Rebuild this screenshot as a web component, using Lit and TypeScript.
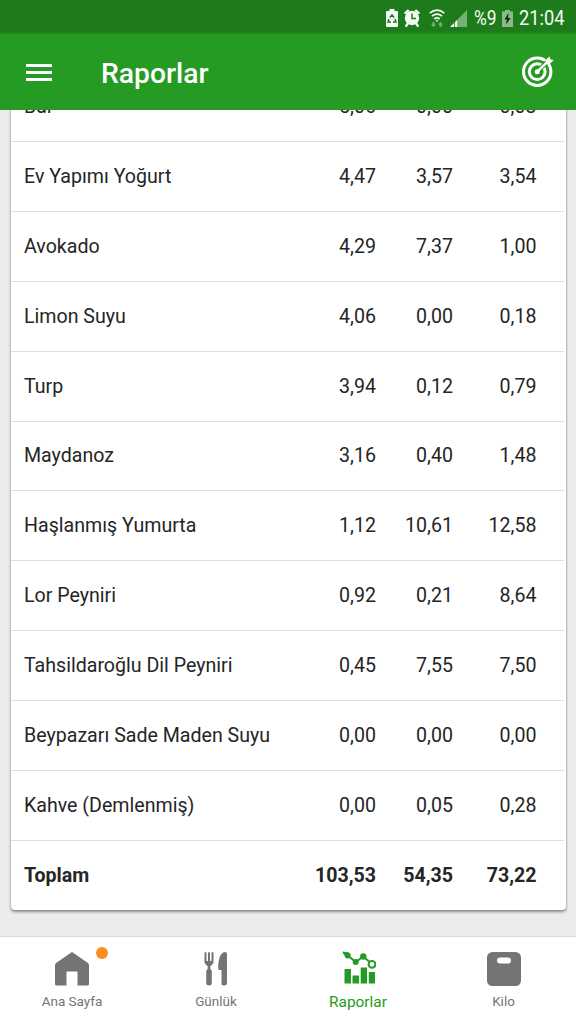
import { LitElement, html, css, svg } from "lit";
import { customElement, property } from "lit/decorators.js";
import { classMap } from "lit/directives/class-map.js";

interface Food {
  name: string;
  values: string[];
}

const foods: Food[] = [
  { name: "Bal", values: ["5,06", "0,00", "0,03"] },
  { name: "Ev Yapımı Yoğurt", values: ["4,47", "3,57", "3,54"] },
  { name: "Avokado", values: ["4,29", "7,37", "1,00"] },
  { name: "Limon Suyu", values: ["4,06", "0,00", "0,18"] },
  { name: "Turp", values: ["3,94", "0,12", "0,79"] },
  { name: "Maydanoz", values: ["3,16", "0,40", "1,48"] },
  { name: "Haşlanmış Yumurta", values: ["1,12", "10,61", "12,58"] },
  { name: "Lor Peyniri", values: ["0,92", "0,21", "8,64"] },
  { name: "Tahsildaroğlu Dil Peyniri", values: ["0,45", "7,55", "7,50"] },
  { name: "Beypazarı Sade Maden Suyu", values: ["0,00", "0,00", "0,00"] },
  { name: "Kahve (Demlenmiş)", values: ["0,00", "0,05", "0,28"] },
];

const total: Food = { name: "Toplam", values: ["103,53", "54,35", "73,22"] };

@customElement("status-bar")
export class StatusBar extends LitElement {
  static styles = css`
    :host {
      display: flex;
      align-items: center;
      justify-content: flex-end;
      height: 34px;
      flex-shrink: 0;
      box-sizing: border-box;
      padding: 2px 11px 0 0;
      background: linear-gradient(#1e7b1b 0 31px, #208a1e 34px);
      color: #f4fbf4;
      font-family: "Roboto", sans-serif;
      font-size: 20.5px;
      line-height: 32px;
    }

    svg {
      display: block;
      flex-shrink: 0;
    }

    .saver {
      margin-right: 6px;
    }

    .alarm {
      margin-right: 9px;
    }

    .wifi {
      margin-right: 5px;
    }

    .signal {
      margin-right: 7px;
    }

    .percent {
      width: 23px;
      margin-right: 5px;
    }

    .battery {
      margin-right: 6px;
    }

    .clock {
      width: 46px;
    }

    span {
      display: block;
      white-space: nowrap;
    }

    span b {
      display: inline-block;
      font-weight: 400;
      transform: scaleX(0.89);
      transform-origin: 0 50%;
    }

    .percent b {
      transform: scaleX(0.85);
    }
  `;

  render() {
    return html`
      <svg class="saver" width="12" height="18" viewBox="0 0 12 18">
        <path fill="currentColor" d="M3.5 0h5v2H11q1 0 1 1v14q0 1-1 1H1q-1 0-1-1V3q0-1 1-1h2.5z" />
        <path
          fill="none"
          stroke="#1e7b1b"
          stroke-width="1.5"
          d="M3.8 8.500 6 6l2.200 2.500M9 10l1 3H7M5 13H2l1-3"
        />
      </svg>
      <svg class="alarm" width="16" height="18" viewBox="0 0 16 18">
        <circle cx="8" cy="9" r="7.2" fill="currentColor" />
        <path
          stroke="currentColor"
          stroke-width="2.4"
          stroke-linecap="round"
          d="M1.5 4 4 1.7M14.5 4 12 1.7M3.5 15l-1.2 1.7M12.5 15l1.2 1.7"
        />
        <path fill="none" stroke="#1e7b1b" stroke-width="1.5" d="M8 4.5V9.500h4" />
      </svg>
      <svg class="wifi" width="16" height="18" viewBox="0 0 16 18">
        <g fill="none" stroke="currentColor" stroke-width="1.7">
          <path d="M.7 4.200q7.300-6 14.600 0M3 7.200q5-4 10 0M5.300 10q2.700-2.200 5.400 0" />
        </g>
        <path fill="currentColor" d="M6.500 11.300h3L8 13z" />
        <path fill="currentColor" opacity=".45" d="M3.5 13h2v2.500H7L4.500 18 2 15.500h1.500zM10.500 18h2v-2.500H14L11.500 13 9 15.500h1.500z" />
      </svg>
      <svg class="signal" width="17" height="17" viewBox="0 0 17 17">
        <path fill="currentColor" opacity=".42" d="M17 0v17H8V9z" />
        <path fill="currentColor" d="M7.500 9.500V17H4.800v-4.800zM4 13v4H0z" />
      </svg>
      <span class="percent"><b>%9</b></span>
      <svg class="battery" width="11" height="17" viewBox="0 0 11 17">
        <path fill="currentColor" opacity=".5" d="M3 0h5v1.500h3V17H0V1.500h3z" />
        <path fill="#0d2b0d" d="M6.500 3 2.500 9.500h2.300L4 14.500 8.700 8H6.200z" />
      </svg>
      <span class="clock"><b>21:04</b></span>
    `;
  }
}

@customElement("app-header")
export class AppHeader extends LitElement {
  static styles = css`
    :host {
      display: flex;
      align-items: center;
      height: 76px;
      flex-shrink: 0;
      box-sizing: border-box;
      padding: 0 22px 0 26px;
      background: #259b24;
      color: #fff;
      font-family: "Roboto", sans-serif;
    }

    .menu {
      display: flex;
      flex-direction: column;
      gap: 4px;
      width: 26px;
      margin-right: 49px;
    }

    .menu i {
      height: 3px;
      background: #fff;
    }

    h1 {
      flex: 1;
      margin: 0;
      padding-top: 3px;
      font-size: 28.3px;
      font-weight: 500;
      line-height: 32px;
    }

    svg {
      display: block;
      margin-bottom: 1px;
    }
  `;

  render() {
    return html`
      <div class="menu"><i></i><i></i><i></i></div>
      <h1>Raporlar</h1>
      <svg width="32" height="32" viewBox="0 0 32 32">
        <g fill="none" stroke="#fff">
          <circle cx="15.2" cy="15.7" r="13.7" stroke-width="3" />
          <circle cx="15.2" cy="15.7" r="7.9" stroke-width="3" />
        </g>
        <path stroke="#259b24" stroke-width="4.5" d="M16 15 29 2" />
        <circle cx="15.2" cy="15.7" r="2.5" fill="#fff" />
        <path stroke="#fff" stroke-width="2.4" d="M15.2 15.700 28 3.500" />
        <path fill="#fff" d="m23.500 7.500.3-3.500L27.500.2l.8 3 3.400.8-4 4-4.200.300z" />
      </svg>
    `;
  }
}

@customElement("food-table")
export class FoodTable extends LitElement {
  static styles = css`
    :host {
      display: block;
      box-sizing: border-box;
      background: #fff;
      border-radius: 4px;
      box-shadow: 0 2px 3px rgba(0, 0, 0, 0.4), 0 0 2px rgba(0, 0, 0, 0.2);
      color: #252525;
      font-family: "Roboto", sans-serif;
      font-size: 19.6px;
    }

    .row {
      display: grid;
      grid-template-columns: 1fr 77px 77px 83.5px;
      align-items: center;
      height: 69.85px;
      box-sizing: border-box;
      margin-right: 2px;
      padding: 0 27.5px 0 13px;
      border-bottom: 1px solid #dfdfdf;
      white-space: nowrap;
    }

    .value {
      text-align: right;
    }

    .total {
      height: 69.4px;
      border-bottom: none;
      font-weight: 700;
    }
  `;

  @property({ attribute: false }) foods: Food[] = [];
  @property({ attribute: false }) total?: Food;

  renderRow(food: Food, isTotal = false) {
    return html`
      <div class=${classMap({ row: true, total: isTotal })}>
        <span>${food.name}</span>
        ${food.values.map((value) => html`<span class="value">${value}</span>`)}
      </div>
    `;
  }

  render() {
    return html`
      ${this.foods.map((food) => this.renderRow(food))}
      ${this.total ? this.renderRow(this.total, true) : ""}
    `;
  }
}

const homeIcon = svg`
  <path fill="currentColor" d="M18 1 34 12q1 .8 1 2v19q0 1.500-1.500 1.500H23.500V20.500H12.500v14H2.500Q1 34.500 1 33V14q0-1.200 1-2z" />
`;

const foodIcon = svg`
  <path fill="currentColor" d="M6.500 2q1-2 2 0v8h1.500V2q1-2 2 0v8h1.500V2q1-2 2 0v9q0 2.500-3.200 4.300V18q1.500.5 1.500 2.500v11.500q0 2.500-2.800 2.500T8.200 32V20.500q0-2 1.500-2.500v-2.700Q6.500 13.500 6.500 11z" />
  <path fill="currentColor" d="M29 3v29q0 2.500-3 2.500T23.500 32V19H21.500q-1.300 0-1.300-1.500Q20 5 25 1.500 29 .2 29 3z" />
`;

const reportIcon = svg`
  <path fill="currentColor" d="M4.500 18H11v14.500H4.500zM12.500 24.500H19v8h-6.500zM20.700 16.500H27v16h-6.300zM28.800 21H35v11.500h-6.200z" />
  <path fill="none" stroke="currentColor" stroke-width="2" d="M3 1.500 7.700 4.500l8 6.500 7.600-5.500 7 6" />
  <path fill="currentColor" d="M2.500.5 9 1.500 5.500 6z" />
  <circle cx="7.700" cy="4.500" r="3" fill="currentColor" />
  <circle cx="15.700" cy="11" r="3" fill="currentColor" />
  <circle cx="23.300" cy="5.500" r="3.200" fill="currentColor" />
  <circle cx="32" cy="13.300" r="3.400" fill="#fff" stroke="currentColor" stroke-width="2" />
`;

const weightIcon = svg`
  <rect x="1" y="1" width="34" height="34" rx="5.500" fill="currentColor" />
  <rect x="11" y="6.500" width="14" height="6" rx="3" fill="#fff" />
`;

@customElement("bottom-nav")
export class BottomNav extends LitElement {
  static styles = css`
    :host {
      display: flex;
      height: 87px;
      flex-shrink: 0;
      box-sizing: border-box;
      background: #fff;
      box-shadow: 0 -1px 1px rgba(0, 0, 0, 0.08);
      color: #747474;
      font-family: "Roboto", sans-serif;
      font-size: 13.5px;
    }

    .tab {
      display: flex;
      width: 144px;
      flex-direction: column;
      align-items: center;
      padding-top: 14px;
      box-sizing: border-box;
    }

    .tab.active {
      width: 140px;
      color: #259b24;
      font-size: 15.4px;
    }

    .tab:last-child {
      width: 148px;
      padding-left: 3px;
    }

    .icon {
      position: relative;
      width: 36px;
      height: 36px;
    }

    .label {
      margin-top: 5px;
      line-height: 19px;
    }

    .active .label {
      margin-top: 6px;
    }

    .dot {
      position: absolute;
      top: -4px;
      left: 42px;
      width: 12px;
      height: 12px;
      border-radius: 50%;
      background: #fb8f1d;
    }

    svg {
      display: block;
    }
  `;

  tabs = [
    { label: "Ana Sayfa", icon: homeIcon, dot: true },
    { label: "Günlük", icon: foodIcon },
    { label: "Raporlar", icon: reportIcon, active: true },
    { label: "Kilo", icon: weightIcon },
  ];

  render() {
    return this.tabs.map(
      (tab) => html`
        <div class=${classMap({ tab: true, active: !!tab.active })}>
          <div class="icon">
            <svg width="36" height="36" viewBox="0 0 36 36">${tab.icon}</svg>
            ${tab.dot ? html`<i class="dot"></i>` : ""}
          </div>
          <span class="label">${tab.label}</span>
        </div>
      `
    );
  }
}

@customElement("app-root")
export class AppRoot extends LitElement {
  static styles = css`
    :host {
      display: flex;
      flex-direction: column;
      height: 1024px;
      overflow: hidden;
      background: #ececec;
    }

    main {
      display: flex;
      flex: 1;
      min-height: 0;
      flex-direction: column;
      justify-content: flex-end;
      overflow: hidden;
      padding: 0 10px 27px 11px;
    }

    food-table {
      flex-shrink: 0;
    }
  `;

  render() {
    return html`
      <status-bar></status-bar>
      <app-header></app-header>
      <main>
        <food-table .foods=${foods} .total=${total}></food-table>
      </main>
      <bottom-nav></bottom-nav>
    `;
  }
}
